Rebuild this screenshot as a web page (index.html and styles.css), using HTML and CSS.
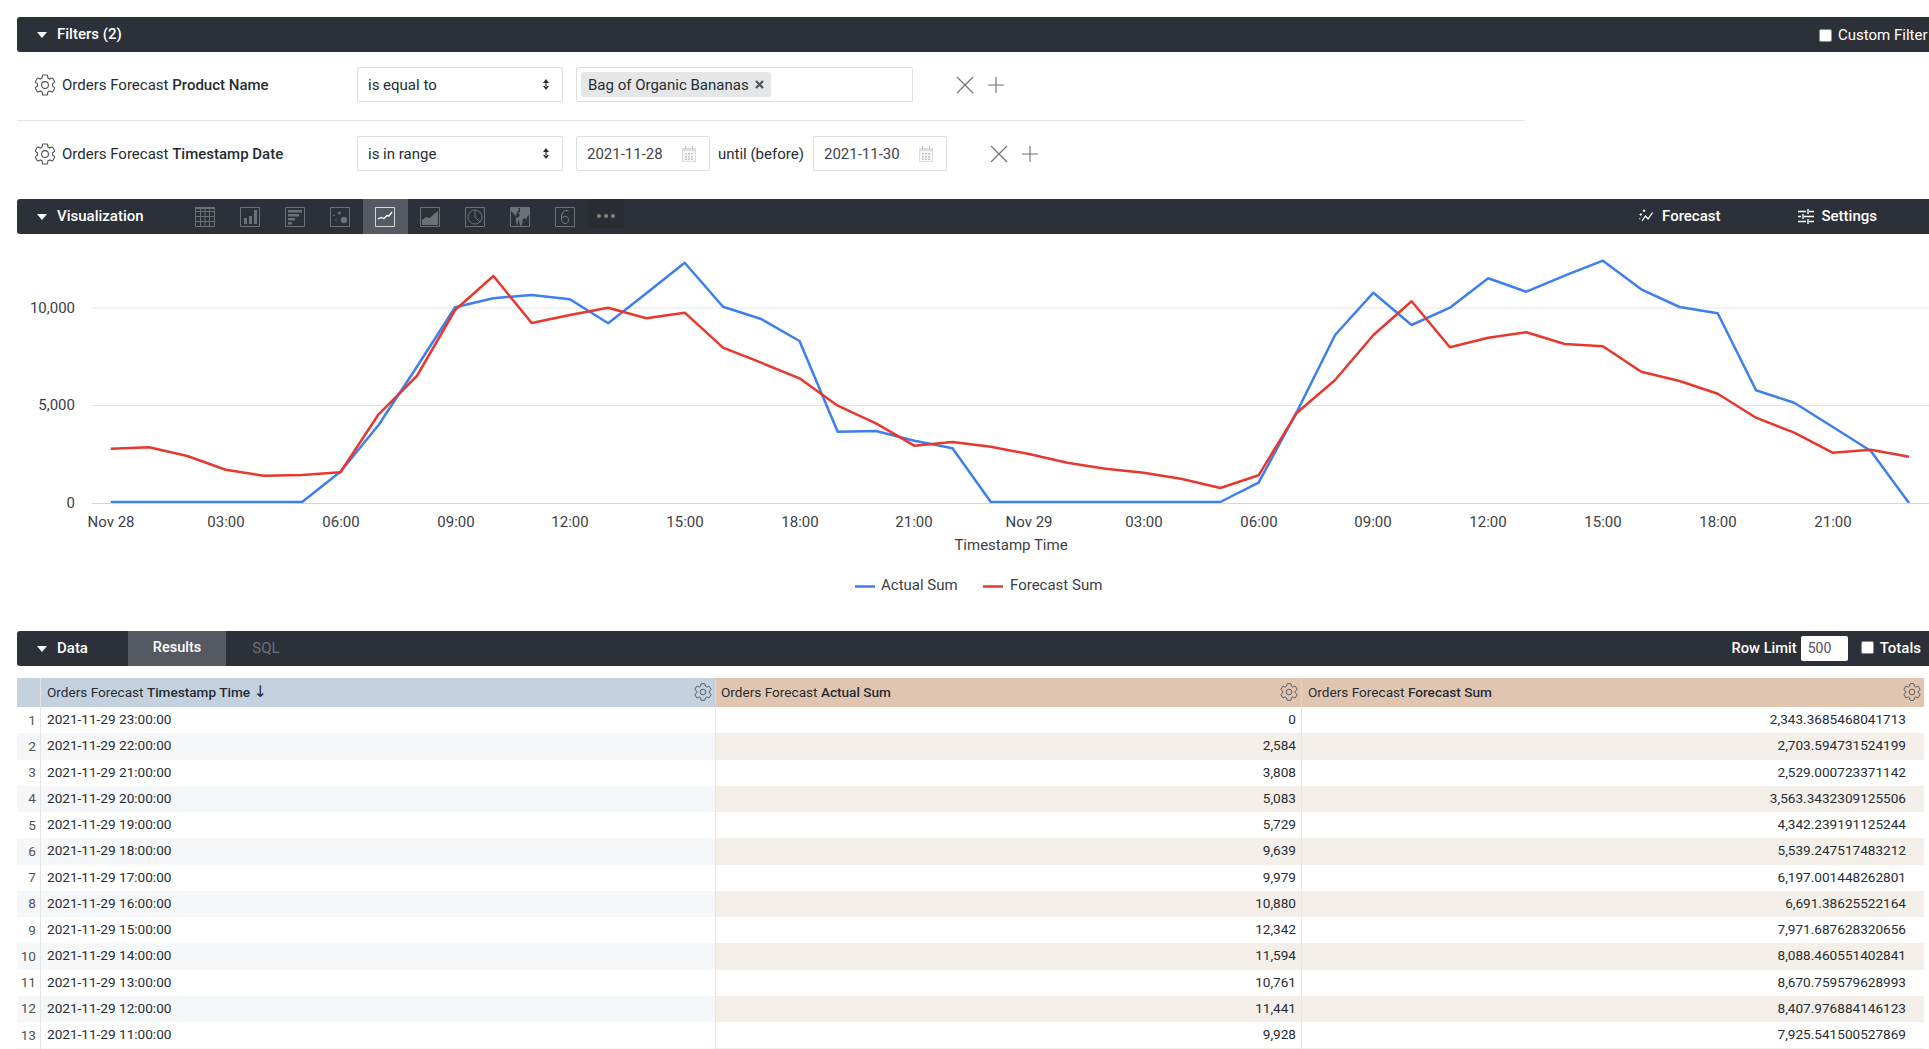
FILE: index.html
```html
<!DOCTYPE html>
<html lang="en">
<head>
    <meta charset="UTF-8">
    <title>Orders Forecast Explore</title>
    <link rel="stylesheet" href="styles.css">
</head>
<body>
    <svg class="defs" width="0" height="0">
        <symbol id="gear" viewBox="0 0 24 24">
            <path fill="none" stroke="currentColor" stroke-width="1.1" d="M19.43 12.98c.04-.32.07-.64.07-.98 0-.34-.03-.66-.07-.98l2.11-1.65c.19-.15.24-.42.12-.64l-2-3.46c-.09-.16-.26-.25-.44-.25-.06 0-.12.01-.17.03l-2.49 1c-.52-.4-1.08-.73-1.69-.98l-.38-2.65C14.46 2.18 14.25 2 14 2h-4c-.25 0-.46.18-.49.42l-.38 2.65c-.61.25-1.17.59-1.69.98l-2.49-1c-.06-.02-.12-.03-.18-.03-.17 0-.34.09-.43.25l-2 3.46c-.13.22-.07.49.12.64l2.11 1.65c-.04.32-.07.65-.07.98 0 .33.03.66.07.98l-2.11 1.65c-.19.15-.24.42-.12.64l2 3.46c.09.16.26.25.44.25.06 0 .12-.01.17-.03l2.49-1c.52.4 1.08.73 1.69.98l.38 2.65c.03.24.24.42.49.42h4c.25 0 .46-.18.49-.42l.38-2.65c.61-.25 1.17-.59 1.69-.98l2.49 1c.06.02.12.03.18.03.17 0 .34-.09.43-.25l2-3.46c.12-.22.07-.49-.12-.64l-2.11-1.65z"/>
            <circle cx="12" cy="12" r="3.4" fill="none" stroke="currentColor" stroke-width="1.1"/>
        </symbol>
        <symbol id="calendar" viewBox="0 0 14 16">
            <path fill="#dcdddf" d="M0 2h14v14H0z"/>
            <path fill="#f7f7f8" d="M1 5h12v10H1z"/>
            <path fill="#c2c4c7" d="M3 0h1v3H3zM10 0h1v3h-1zM3 7h2v1.500H3zM6 7h2v1.500H6zM9 7h2v1.500H9zM3 10h2v1.500H3zM6 10h2v1.500H6zM9 10h2v1.500H9zM3 12.500h2V14H3zM6 12.500h2V14H6zM9 12.500h2V14H9z"/>
        </symbol>
        <symbol id="cross" viewBox="0 0 18 18">
            <path fill="none" stroke="#6b6f76" stroke-width="1.1" d="M1 1l16 16M17 1L1 17"/>
        </symbol>
        <symbol id="plus" viewBox="0 0 18 18">
            <path fill="none" stroke="#6b6f76" stroke-width="1.1" d="M9 1v16M1 9h16"/>
        </symbol>
        <symbol id="updown" viewBox="0 0 6 11">
            <path fill="#262d33" d="M3 0l3 4H0zM3 11l3-4H0zM2.400 3h1.200v5H2.400z"/>
        </symbol>
        <symbol id="tag-x" viewBox="0 0 9 9">
            <path fill="none" stroke="#50545b" stroke-width="2.200" d="M1 1l7 7M8 1L1 8"/>
        </symbol>
    </svg>

    <section class="bar bar-filters">
        <span class="caret"></span>
        <span class="bar-title">Filters (2)</span>
        <label class="check check-custom"><span class="box"></span>Custom Filter</label>
    </section>

    <div class="filters">
        <div class="filter-row filter-row-first">
            <svg class="gear"><use href="#gear"/></svg>
            <div class="filter-name">Orders Forecast <b>Product Name</b></div>
            <div class="select">is equal to<svg class="updown"><use href="#updown"/></svg></div>
            <div class="tags"><span class="tag">Bag of Organic Bananas<svg class="tag-x"><use href="#tag-x"/></svg></span></div>
            <div class="filter-actions">
                <svg class="act"><use href="#cross"/></svg>
                <svg class="act"><use href="#plus"/></svg>
            </div>
        </div>
        <div class="filter-row filter-row-second">
            <svg class="gear"><use href="#gear"/></svg>
            <div class="filter-name">Orders Forecast <b>Timestamp Date</b></div>
            <div class="select">is in range<svg class="updown"><use href="#updown"/></svg></div>
            <div class="date">2021-11-28<svg class="cal"><use href="#calendar"/></svg></div>
            <span class="until">until (before)</span>
            <div class="date">2021-11-30<svg class="cal"><use href="#calendar"/></svg></div>
            <div class="filter-actions">
                <svg class="act"><use href="#cross"/></svg>
                <svg class="act"><use href="#plus"/></svg>
            </div>
        </div>
    </div>

    <section class="bar bar-viz">
        <span class="caret"></span>
        <span class="bar-title viz-title">Visualization</span>
        <div class="viz-types">
            <div class="viz-btn">
                <svg viewBox="0 0 20 20"><path fill="none" stroke="#6d7077" d="M.5.500h19v19H.5zM.5 4.500h19M.5 9.500h19M.5 14.500h19M5.500 1v18M10 1v18M14.500 1v18"/><path fill="#6d7077" d="M0 0h20v2H0z"/></svg>
            </div>
            <div class="viz-btn">
                <svg viewBox="0 0 20 20"><path fill="none" stroke="#6d7077" d="M.5.500h19v19H.5z"/><path fill="#6d7077" d="M4 11h3v6H4zM9 9h3v8H9zM14 3h3v14h-3z"/></svg>
            </div>
            <div class="viz-btn">
                <svg viewBox="0 0 20 20"><path fill="none" stroke="#6d7077" d="M.5.500h19v19H.5z"/><path fill="#6d7077" d="M3 3h14v2.500H3zM3 7h11v2.500H3zM3 11h7v2.500H3zM3 15h4v2.500H3z"/></svg>
            </div>
            <div class="viz-btn">
                <svg viewBox="0 0 20 20"><path fill="none" stroke="#6d7077" d="M.5.500h19v19H.5z"/><circle cx="14" cy="13" r="3.200" fill="#6d7077"/><circle cx="9.500" cy="6" r="1.500" fill="#6d7077"/><circle cx="4" cy="8.500" r=".8" fill="#6d7077"/><circle cx="6" cy="13" r=".8" fill="#6d7077"/></svg>
            </div>
            <div class="viz-btn viz-btn-on">
                <svg viewBox="0 0 20 20"><path fill="none" stroke="#fff" stroke-opacity=".75" d="M.5.500h19v19H.5z"/><path fill="none" stroke="#fff" stroke-width="1.300" d="M3 12l3-1.500 3 1 3-3 2 .5 3-4"/></svg>
            </div>
            <div class="viz-btn">
                <svg viewBox="0 0 20 20"><path fill="none" stroke="#6d7077" d="M.5.500h19v19H.5z"/><path fill="#6d7077" d="M2 13l4-3 4 1 4-4 4-3v14H2z"/></svg>
            </div>
            <div class="viz-btn">
                <svg viewBox="0 0 20 20"><path fill="none" stroke="#6d7077" d="M.5.500h19v19H.5z"/><circle cx="10" cy="10" r="7" fill="none" stroke="#6d7077"/><path fill="none" stroke="#6d7077" d="M10 3v7l5 5"/></svg>
            </div>
            <div class="viz-btn">
                <svg viewBox="0 0 20 20"><path fill="none" stroke="#6d7077" d="M.5.500h19v19H.5z"/><path fill="#6d7077" d="M1 1h7l1 2-2 3-1 3-3-3-2-2zM6 10l3 1-1 4-1 4-1-4zM10 1h9v7l-2 2-1 3-1-2-2 1-1 6-2 1-1-5-1-3 2-3-2-2 2-1z"/></svg>
            </div>
            <div class="viz-btn">
                <svg viewBox="0 0 20 20"><path fill="none" stroke="#6d7077" d="M.5.500h19v19H.5z"/><path fill="none" stroke="#7c7f85" d="M13.500 4c-4-1.500-7 1-7 7 0 4 1.500 5.500 3.500 5.500s3.500-1.600 3.500-3.700-1.500-3.500-3.500-3.500c-1.800 0-3 1-3.500 2.500"/></svg>
            </div>
            <div class="viz-more"><span></span><span></span><span></span></div>
        </div>
        <div class="viz-right">
            <span class="viz-action viz-forecast">
                <svg width="14" height="13" viewBox="0 0 14 13"><path fill="none" stroke="#fff" stroke-width="1.300" d="M3 12l3.500-5 2.500 3 4.500-6.500"/><path fill="none" stroke="#fff" stroke-width="1.100" d="M.5 5.500h2.500M1.750 4.250v2.500M5 .5v2.500M3.750 1.750h2.500"/><path fill="none" stroke="#fff" stroke-width="1.100" stroke-dasharray="1 1.500" d="M.5 10l2-2"/></svg>
                Forecast
            </span>
            <span class="viz-action viz-settings">
                <svg width="16" height="16" viewBox="0 0 16 16"><path fill="none" stroke="#fff" stroke-width="1.400" d="M0 3.500h8M11 3.500h5M10 1v5M0 8.500h3M6 8.500h10M5 6v5M0 13.500h8M11 13.500h5M10 11v5"/></svg>
                Settings
            </span>
        </div>
    </section>

    <div class="chart">
        <svg width="1929" height="397" viewBox="0 234 1929 397">
            <path class="grid" d="M92 308H1929M92 405.500H1929"/>
            <polyline class="series-blue" points="110.800,502 149.100,502 187.300,502 225.600,502 263.800,502 302.100,502 340.400,471.700 378.600,425 416.900,366.700 455.100,307.300 493.400,298.300 531.700,295 569.900,299.300 608.200,323.300 646.400,293.300 684.700,262.700 723,306.700 761.200,319 799.500,341 837.700,431.700 876,431 914.300,440.700 952.500,448.300 990.800,502 1029,502 1067.300,502 1105.600,502 1143.800,502 1182.100,502 1220.300,502 1258.600,482.700 1296.900,411.700 1335.100,335 1373.400,292.700 1411.600,325 1449.900,307.700 1488.200,278.300 1526.400,291.700 1564.700,275.700 1602.900,260.700 1641.200,289.300 1679.500,307 1717.700,313.300 1756,390.300 1794.200,402.700 1832.500,426.700 1870.800,451 1909,503"/>
            <polyline class="series-red" points="110.800,448.700 149.100,447.300 187.300,456 225.600,469.700 263.800,475.700 302.100,475 340.400,472.300 378.600,414.300 416.900,376 455.100,310 493.400,276 531.700,323 569.900,315 608.200,307.700 646.400,318.300 684.700,312.700 723,347.700 761.200,362.700 799.500,378.300 837.700,405.700 876,423.300 914.300,445.700 952.500,442 990.800,446.700 1029,454 1067.300,462.700 1105.600,468.700 1143.800,472.700 1182.100,479 1220.300,488 1258.600,475.300 1296.900,412.700 1335.100,380 1373.400,335 1411.600,301.300 1449.900,347.300 1488.200,337.700 1526.400,332.300 1564.700,344 1602.900,346.300 1641.200,371.700 1679.500,381 1717.700,393.700 1756,417.700 1794.200,432.700 1832.500,452.700 1870.800,449.700 1909,456.700"/>
            <path class="axis-line" d="M92 503.500H1929"/>

            <g class="y-labels">
                <text x="75" y="313">10,000</text>
                <text x="75" y="410">5,000</text>
                <text x="75" y="508">0</text>
            </g>
            <g class="x-labels">
                <text x="111" y="527">Nov 28</text>
                <text x="226" y="527">03:00</text>
                <text x="341" y="527">06:00</text>
                <text x="456" y="527">09:00</text>
                <text x="570" y="527">12:00</text>
                <text x="685" y="527">15:00</text>
                <text x="800" y="527">18:00</text>
                <text x="914" y="527">21:00</text>
                <text x="1029" y="527">Nov 29</text>
                <text x="1144" y="527">03:00</text>
                <text x="1259" y="527">06:00</text>
                <text x="1373" y="527">09:00</text>
                <text x="1488" y="527">12:00</text>
                <text x="1603" y="527">15:00</text>
                <text x="1718" y="527">18:00</text>
                <text x="1833" y="527">21:00</text>
                <text x="1011" y="550">Timestamp Time</text>
            </g>
            <path class="series-blue" d="M855 586.500h20"/>
            <text class="legend" x="881" y="590">Actual Sum</text>
            <path class="series-red" d="M983 586.500h20"/>
            <text class="legend" x="1010" y="590">Forecast Sum</text>
        </svg>
    </div>

    <section class="bar bar-data">
        <span class="caret"></span>
        <span class="bar-title data-title">Data</span>
        <span class="tab tab-on">Results</span>
        <span class="tab tab-off">SQL</span>
        <div class="data-right">
            <span class="row-limit-label">Row Limit</span>
            <span class="row-limit">500</span>
            <label class="check check-totals"><span class="box"></span>Totals</label>
        </div>
    </section>

    <div class="table">
        <div class="th th-index"></div>
        <div class="th th-dim">
            <span>Orders Forecast <b>Timestamp Time</b> <span class="arrow">↓</span></span>
            <svg class="gear-sm"><use href="#gear"/></svg>
        </div>
        <div class="th th-msr th-mid">
            <span>Orders Forecast <b>Actual Sum</b></span>
            <svg class="gear-sm"><use href="#gear"/></svg>
        </div>
        <div class="th th-msr th-last">
            <span>Orders Forecast <b>Forecast Sum</b></span>
            <svg class="gear-sm"><use href="#gear"/></svg>
        </div>

        <div class="idx">1</div><div class="td">2021-11-29 23:00:00</div><div class="td num">0</div><div class="td num last">2,343.3685468041713</div>
        <div class="idx alt">2</div><div class="td alt">2021-11-29 22:00:00</div><div class="td num alt-m">2,584</div><div class="td num last alt-m">2,703.594731524199</div>
        <div class="idx">3</div><div class="td">2021-11-29 21:00:00</div><div class="td num">3,808</div><div class="td num last">2,529.000723371142</div>
        <div class="idx alt">4</div><div class="td alt">2021-11-29 20:00:00</div><div class="td num alt-m">5,083</div><div class="td num last alt-m">3,563.3432309125506</div>
        <div class="idx">5</div><div class="td">2021-11-29 19:00:00</div><div class="td num">5,729</div><div class="td num last">4,342.239191125244</div>
        <div class="idx alt">6</div><div class="td alt">2021-11-29 18:00:00</div><div class="td num alt-m">9,639</div><div class="td num last alt-m">5,539.247517483212</div>
        <div class="idx">7</div><div class="td">2021-11-29 17:00:00</div><div class="td num">9,979</div><div class="td num last">6,197.001448262801</div>
        <div class="idx alt">8</div><div class="td alt">2021-11-29 16:00:00</div><div class="td num alt-m">10,880</div><div class="td num last alt-m">6,691.38625522164</div>
        <div class="idx">9</div><div class="td">2021-11-29 15:00:00</div><div class="td num">12,342</div><div class="td num last">7,971.687628320656</div>
        <div class="idx alt">10</div><div class="td alt">2021-11-29 14:00:00</div><div class="td num alt-m">11,594</div><div class="td num last alt-m">8,088.460551402841</div>
        <div class="idx">11</div><div class="td">2021-11-29 13:00:00</div><div class="td num">10,761</div><div class="td num last">8,670.759579628993</div>
        <div class="idx alt">12</div><div class="td alt">2021-11-29 12:00:00</div><div class="td num alt-m">11,441</div><div class="td num last alt-m">8,407.976884146123</div>
        <div class="idx">13</div><div class="td">2021-11-29 11:00:00</div><div class="td num">9,928</div><div class="td num last">7,925.541500527869</div>
        <div class="idx alt"></div><div class="td alt"></div><div class="td num alt-m"></div><div class="td num last alt-m"></div>
    </div>
</body>
</html>
```

FILE: styles.css
```css
html, body {
    margin: 0;
    height: 1049px;
    overflow: hidden;
    background: #fff;
}
body {
    font-family: Roboto, "Liberation Sans", sans-serif;
    font-size: 15px;
    color: #262d33;
    padding: 17px 0 0 17px;
    box-sizing: border-box;
}
b {
    font-weight: 500;
}
.defs {
    position: absolute;
}

/* dark section bars */
.bar {
    display: flex;
    align-items: center;
    height: 35px;
    background: #2c3038;
    color: #fff;
    border-radius: 3px 0 0 3px;
    white-space: nowrap;
}
.caret {
    width: 0;
    height: 0;
    margin: 0 10px 0 20px;
    border-left: 5px solid transparent;
    border-right: 5px solid transparent;
    border-top: 6px solid #fff;
}
.bar-title {
    font-weight: 500;
    padding-bottom: 2px;
}
.check {
    display: flex;
    align-items: center;
}
.box {
    width: 13px;
    height: 13px;
    margin-right: 6px;
    background: #fff;
    border: 1px solid #8a8d92;
    border-radius: 2px;
    box-sizing: border-box;
}
.check-custom {
    margin-left: auto;
    width: 110px;
    font-weight: 400;
    padding-top: 1px;
}

/* filters */
.filters {
    height: 147px;
}
.filter-row {
    display: flex;
    align-items: center;
    height: 67px;
    width: 1508px;
    padding-bottom: 3px;
    box-sizing: border-box;
}
.filter-row-first {
    height: 69px;
    border-bottom: 1px solid #e4e5e6;
}
.filter-row-second {
    padding-bottom: 2px;
}
.gear {
    width: 24px;
    height: 24px;
    margin-left: 16px;
    color: #50545b;
    flex: none;
}
.filter-name {
    width: 300px;
    padding-left: 5px;
    box-sizing: border-box;
}
.select {
    display: flex;
    align-items: center;
    justify-content: space-between;
    width: 206px;
    height: 35px;
    padding: 0 13px 0 10px;
    box-sizing: border-box;
    border: 1px solid #dedfe1;
    border-radius: 2px;
    flex: none;
}
.updown {
    width: 6px;
    height: 11px;
}
.tags {
    display: flex;
    align-items: center;
    width: 337px;
    height: 35px;
    margin-left: 13px;
    padding-left: 4px;
    box-sizing: border-box;
    border: 1px solid #dedfe1;
    border-radius: 2px;
    flex: none;
}
.tag {
    display: flex;
    align-items: center;
    gap: 6px;
    height: 25px;
    padding: 0 7px;
    background: #e5e6e8;
    border-radius: 3px;
}
.tag-x {
    width: 9px;
    height: 9px;
}
.date {
    display: flex;
    align-items: center;
    justify-content: space-between;
    width: 134px;
    height: 35px;
    margin-left: 13px;
    padding: 0 13px 0 10px;
    box-sizing: border-box;
    border: 1px solid #dedfe1;
    border-radius: 2px;
    color: #3e434a;
    flex: none;
}
.until {
    margin-left: 8px;
    margin-right: -4px;
    width: 86px;
    white-space: nowrap;
}
.cal {
    width: 14px;
    height: 16px;
}
.filter-actions {
    display: flex;
    gap: 13px;
    margin-left: 43px;
}
.act {
    width: 18px;
    height: 18px;
}

/* visualization bar */
.viz-title {
    width: 126px;
}
.viz-types {
    display: flex;
    height: 100%;
}
.viz-btn {
    display: flex;
    align-items: center;
    justify-content: center;
    width: 45px;
    height: 100%;
}
.viz-btn svg {
    width: 20px;
    height: 20px;
    margin-right: 1px;
}
.viz-btn-on {
    background: #555961;
}
.viz-more {
    display: flex;
    align-items: center;
    justify-content: center;
    gap: 3px;
    width: 36px;
    height: 29px;
    padding-top: 5px;
    box-sizing: border-box;
    background: #292c33;
    border-radius: 0 0 3px 3px;
}
.viz-more span {
    width: 4px;
    height: 4px;
    border-radius: 50%;
    background: #8a8378;
}
.viz-right {
    display: flex;
    margin-left: auto;
    font-weight: 500;
}
.viz-action {
    display: flex;
    align-items: center;
    gap: 7px;
    padding-bottom: 2px;
}
.viz-forecast {
    gap: 9px;
    margin-right: 78px;
}
.viz-settings {
    margin-right: 52px;
}

/* chart */
.chart {
    height: 397px;
    margin-left: -17px;
}
.chart svg {
    display: block;
    font-family: Roboto, sans-serif;
    font-size: 15px;
}
.chart text {
    fill: #3c4047;
}
.grid {
    fill: none;
    stroke: #e6e6e6;
    stroke-width: 1;
}
.axis-line {
    fill: none;
    stroke: #ccd6eb;
    stroke-width: 1;
}
.series-blue, .series-red {
    fill: none;
    stroke-width: 2.5;
    stroke-linejoin: round;
}
.series-blue {
    stroke: #3d7ff0;
}
.series-red {
    stroke: #e8382e;
}
.y-labels {
    text-anchor: end;
}
.x-labels {
    text-anchor: middle;
}

/* data bar */
.data-title {
    width: 71px;
}
.tab {
    display: flex;
    align-items: center;
    justify-content: center;
    height: 100%;
    padding-bottom: 2px;
    box-sizing: border-box;
}
.tab-on {
    width: 98px;
    background: #555961;
    font-size: 14.5px;
    font-weight: 500;
}
.tab-off {
    width: 80px;
    color: #6c7078;
}
.data-right {
    display: flex;
    align-items: center;
    margin-left: auto;
    padding-right: 8px;
    font-weight: 500;
}
.row-limit-label {
    padding-bottom: 2px;
    font-size: 14.7px;
}
.row-limit {
    width: 47px;
    height: 25px;
    line-height: 25px;
    margin: 0 13px 0 4px;
    padding-left: 7px;
    box-sizing: border-box;
    background: #fff;
    border-radius: 2px;
    color: #50545b;
    font-size: 14px;
    font-weight: 400;
}
.check-totals {
    font-weight: 500;
    padding-bottom: 2px;
}

/* results table */
.table {
    display: grid;
    grid-template-columns: 24px 674px 586px 623px;
    grid-template-rows: 29px;
    grid-auto-rows: 26.25px;
    margin-top: 12px;
    font-size: 13.6px;
}
.th {
    display: flex;
    align-items: center;
    justify-content: space-between;
    padding: 0 2px 2px 6px;
    white-space: nowrap;
}
.th-index, .th-dim {
    background: #c4d2e0;
}
.th-index {
    padding: 0;
    border-right: 1px solid #e4e5e6;
}
.th-msr {
    background: #e0c6b1;
    border-left: 1px solid #e4d5c7;
}
.th-mid {
    padding-left: 5px;
}
.arrow {
    font-family: "DejaVu Sans", sans-serif;
    font-size: 16px;
    line-height: 1;
}
.gear-sm {
    width: 20px;
    height: 20px;
    color: #50545b;
    flex: none;
}
.idx {
    display: flex;
    align-items: center;
    justify-content: flex-end;
    padding-right: 4px;
    padding-bottom: 1px;
    border-right: 1px solid #e4e5e6;
    color: #50545b;
    box-sizing: border-box;
}
.td {
    display: flex;
    align-items: center;
    padding-left: 6px;
    padding-bottom: 2px;
    box-sizing: border-box;
}
.num {
    justify-content: flex-end;
    padding-left: 0;
    padding-right: 5px;
    border-left: 1px solid #e4e5e6;
}
.last {
    padding-right: 18px;
}
.alt {
    background: #f6f7f8;
}
.alt-m {
    background: #f4efe8;
}
```
